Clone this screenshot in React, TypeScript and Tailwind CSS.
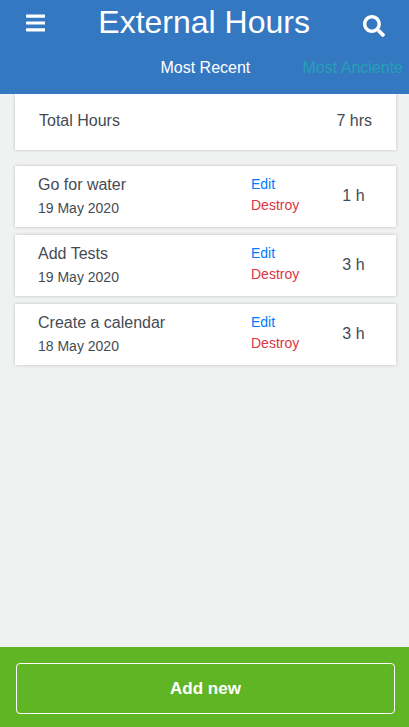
import { FaBars, FaSearch } from 'react-icons/fa';

type Entry = { title: string; date: string; hours: string };

const entries: Entry[] = [
  { title: 'Go for water', date: '19 May 2020', hours: '1 h' },
  { title: 'Add Tests', date: '19 May 2020', hours: '3 h' },
  { title: 'Create a calendar', date: '18 May 2020', hours: '3 h' },
];

const card = 'bg-white shadow-[0_0_3px_rgba(0,0,0,0.22)]';

function Header() {
  return (
    <header className="relative z-10 h-[94px] bg-[#3578c2] text-white">
      <div className="flex h-[46px] items-start justify-between pl-[26px] pr-6">
        <button aria-label="Menu" className="mt-3">
          <FaBars className="h-[22px] w-[19.25px]" />
        </button>
        <h1 className="-mt-[2px] text-[32px] leading-[48px]">External Hours</h1>
        <button aria-label="Search" className="mt-[15px]">
          <FaSearch className="h-[22px] w-[22px]" />
        </button>
      </div>
      <nav className="grid grid-cols-[276.5px_1fr] pt-[10px] text-base leading-6 whitespace-nowrap">
        <a className="pl-[160.5px]">Most Recent</a>
        <a className="pl-[26px] text-[#26a0b5]">Most Anciente</a>
      </nav>
    </header>
  );
}

function EntryCard({ title, date, hours }: Entry) {
  return (
    <li className={`${card} grid h-[61px] grid-cols-[213px_91.3px_1fr] pl-[23px]`}>
      <div className="pt-[7px]">
        <h2 className="text-base leading-6">{title}</h2>
        <p className="text-sm leading-[23px]">{date}</p>
      </div>
      <div className="flex flex-col pt-2 text-sm leading-[21px]">
        <a className="text-[#007bff]">Edit</a>
        <a className="text-[#dc3545]">Destroy</a>
      </div>
      <span className="pt-[18px] text-base leading-6">{hours}</span>
    </li>
  );
}

export default function App() {
  return (
    <div className="flex h-[727px] w-[409px] flex-col overflow-hidden bg-[#f0f2f1] font-['Liberation_Sans',Arial,sans-serif] text-[#454b54]">
      <Header />
      <main className="flex-1 pl-[15px] pr-[13px]">
        <section className={`${card} flex h-14 items-center justify-between pb-[2px] pl-6 pr-6 text-base leading-6`}>
          <span>Total Hours</span>
          <span>7 hrs</span>
        </section>
        <ul className="mt-4 flex flex-col gap-2">
          {entries.map((entry) => (
            <EntryCard key={entry.title} {...entry} />
          ))}
        </ul>
      </main>
      <footer className="h-20 bg-[#60b524] pt-4 pr-[14px] pl-4">
        <button className="h-[51px] w-full rounded-[4px] border border-white text-[17px] font-bold text-white">
          Add new
        </button>
      </footer>
    </div>
  );
}
